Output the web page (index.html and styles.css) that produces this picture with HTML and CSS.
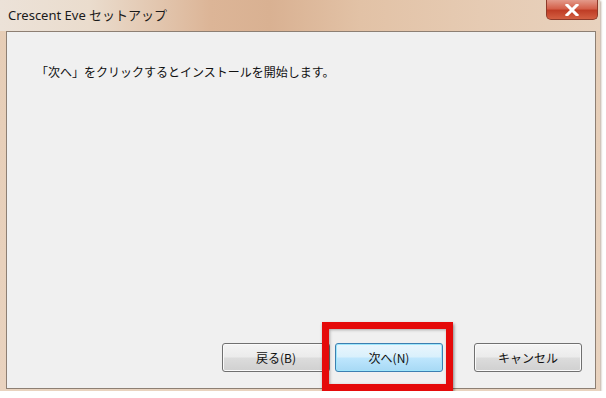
FILE: index.html
```html
<!DOCTYPE html>
<html lang="ja">
<head>
    <meta charset="UTF-8">
    <title>Crescent Eve セットアップ</title>
    <link rel="stylesheet" href="styles.css">
</head>
<body>
    <div class="window">
        <div class="titlebar">
            <div class="title">Crescent Eve セットアップ</div>
            <div class="close-btn">
                <svg width="16" height="12" viewBox="0 0 16 12">
                    <path d="M3 1 L13 11 M13 1 L3 11" stroke="#fff" stroke-width="3" stroke-linecap="square"/>
                </svg>
            </div>
        </div>

        <div class="content">
            <div class="message">「次へ」をクリックするとインストールを開始します。</div>

            <div class="buttons">
                <button class="btn">戻る(B)</button>
                <span class="highlight-wrap">
                    <button class="btn default">次へ(N)</button>
                    <span class="highlight"></span>
                </span>
                <button class="btn cancel">キャンセル</button>
            </div>
        </div>
    </div>
</body>
</html>
```

FILE: styles.css
```css
body {
    margin: 0;
    padding: 0;
    background-color: #ffffff;
    font-family: "Noto Sans", "Noto Sans CJK JP", sans-serif;
}

.window {
    width: 600px;
    height: 391px;
    box-sizing: border-box;
    padding: 0 4px 2px 6px;
    background: linear-gradient(to bottom, #e6cdb6, #e9d3bf);
    display: flex;
    flex-direction: column;
    box-shadow: 1px 1px 2px rgba(120, 90, 60, 0.5);
}

.titlebar {
    height: 31px;
    margin: 0 -4px 0 -6px;
    padding: 0 2px 0 8px;
    display: flex;
    justify-content: space-between;
    align-items: flex-start;
    background: linear-gradient(to right, #ece2d8 0%, #eadccd 15%, #dcb597 35%, #d9b192 45%, #e2c2a6 60%, #e6cbb3 80%, #e8d2be 100%);
}

.title {
    font-size: 13px;
    color: #1a1a1a;
    line-height: 28px;
    padding-top: 1px;
}

.close-btn {
    width: 52px;
    height: 20px;
    box-sizing: border-box;
    border: 1px solid #8e3a2a;
    border-top: none;
    border-radius: 0 0 5px 5px;
    background: linear-gradient(to bottom, #e39a8a 0%, #d4614b 45%, #bf3d26 55%, #d35f42 100%);
    display: flex;
    justify-content: center;
    align-items: center;
}

.content {
    flex-grow: 1;
    background-color: #f0f0f0;
    border: 1px solid #8d7f73;
    display: flex;
    flex-direction: column;
    justify-content: space-between;
    padding: 33px 13px 16px 29px;
}

.message {
    font-family: "Noto Sans CJK JP", sans-serif;
    font-size: 12px;
    color: #111111;
    line-height: 14px;
}

.buttons {
    display: flex;
    justify-content: flex-end;
    align-items: center;
}

.btn {
    width: 108px;
    height: 29px;
    margin: 0;
    font-family: "Noto Sans CJK JP", sans-serif;
    font-size: 12px;
    color: #111111;
    border: 1px solid #707070;
    border-radius: 3px;
    background: linear-gradient(to bottom, #f4f4f4 0%, #ebebeb 48%, #dcdcdc 52%, #d0d0d0 100%);
    box-shadow: inset 0 0 0 1px #fafafa;
    padding: 0;
}

.highlight-wrap {
    position: relative;
    display: flex;
    margin-left: 5px;
}

.btn.default {
    border-color: #3c7fb1;
    background: linear-gradient(to bottom, #eaf6fd 0%, #d9f0fc 48%, #bee6fd 52%, #a7d9f5 100%);
    box-shadow: inset 0 0 0 1px #9ee6fb;
}

.highlight {
    position: absolute;
    left: -13px;
    top: -21px;
    right: -10px;
    bottom: -19px;
    border: 7px solid #e50a0a;
    box-shadow: 1px 2px 3px rgba(0, 0, 0, 0.45), inset 1px 1px 3px rgba(0, 0, 0, 0.3);
}

.btn.cancel {
    margin-left: 31px;
}
```
